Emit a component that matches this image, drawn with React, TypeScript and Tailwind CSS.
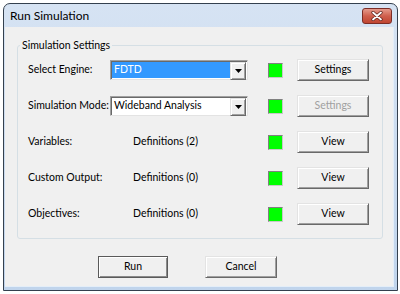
const rows = [
  { label: "Variables:", value: "Definitions (2)" },
  { label: "Custom Output:", value: "Definitions (0)" },
  { label: "Objectives:", value: "Definitions (0)" },
];

function Btn({
  children,
  disabled,
  isDefault,
  className = "",
}: {
  children: React.ReactNode;
  disabled?: boolean;
  isDefault?: boolean;
  className?: string;
}) {
  return (
    <div
      className={`flex items-center justify-center h-[22px] bg-[#f0f0f0] border ${
        isDefault
          ? "border-[#5a5a5a] shadow-[inset_1px_1px_0_#ffffff,inset_-1px_-1px_0_#8a8a8a]"
          : "border-t-[#e3e3e3] border-l-[#e3e3e3] border-r-[#696969] border-b-[#696969] shadow-[inset_1px_1px_0_#ffffff,inset_-1px_-1px_0_#a0a0a0]"
      } ${disabled ? "text-[#a0a0a0]" : "text-black"} ${className}`}
    >
      {children}
    </div>
  );
}

function Combo({ value, selected }: { value: string; selected?: boolean }) {
  return (
    <div className="flex shrink-0 h-[20px] w-[138px] border border-t-[#a0a0a0] border-l-[#a0a0a0] border-r-[#e3e3e3] border-b-[#e3e3e3] bg-white shadow-[inset_1px_1px_0_#696969]">
      <div className="flex-1 pl-[1px] pt-[1px] pb-[1px]">
        <div
          className={`h-full flex items-center pl-[2px] whitespace-nowrap ${
            selected ? "bg-[#3399ff] text-white" : "text-black"
          }`}
        >
          {value}
        </div>
      </div>
      <div className="w-[16px] h-[18px] mt-[1px] mr-[1px] bg-[#f0f0f0] border border-t-[#e3e3e3] border-l-[#e3e3e3] border-r-[#696969] border-b-[#696969] shadow-[inset_1px_1px_0_#ffffff,inset_-1px_-1px_0_#a0a0a0] flex items-center justify-center">
        <svg width="7" height="4" viewBox="0 0 7 4">
          <path d="M0 0h7L3.5 4z" fill="#000" />
        </svg>
      </div>
    </div>
  );
}

function Led() {
  return (
    <div className="w-[15px] h-[15px] bg-[#00ff00] border border-t-[#808080] border-l-[#808080] border-r-[#c8c8c8] border-b-[#c8c8c8]" />
  );
}

export default function App() {
  return (
    <div className="w-[400px] h-[294px] bg-white pt-[3px] pl-[3px] font-['Lato',sans-serif] text-[10.5px] text-black">
      <div className="w-[395px] h-[288px] flex flex-col rounded-t-[7px] border border-[#34404e] bg-gradient-to-b from-[#d6e3f3] to-[#c0d4ec]">
        {/* Title bar */}
        <div className="h-[23px] flex items-center justify-between pl-[6px] pr-[5px]">
          <span className="text-[12px] leading-none">Run Simulation</span>
          <div className="w-[30px] h-[16px] rounded-[3px] border border-[#7b2d26] bg-gradient-to-b from-[#e49a8c] via-[#cf5f4d] to-[#c04531] flex items-center justify-center">
            <svg width="12" height="10" viewBox="0 0 12 10">
              <path
                d="M2 1.5l8 7M10 1.5l-8 7"
                stroke="#5a1e18"
                strokeWidth="3.2"
                strokeLinecap="round"
              />
              <path
                d="M2 1.5l8 7M10 1.5l-8 7"
                stroke="#ffffff"
                strokeWidth="1.8"
                strokeLinecap="round"
              />
            </svg>
          </div>
        </div>

        {/* Client area */}
        <div className="flex-1 ml-[1px] mr-[3px] mb-[3px] bg-[#f0f0f0] border-b border-r border-[#e4eef8] flex flex-col">
          <fieldset className="ml-[12px] mt-[12px] w-[366px] border border-[#d5dfe5] rounded-[3px] pl-[10px] pt-[7px] pb-[13px]">
            <legend className="-ml-[8px] px-[2px] leading-[13px]">Simulation Settings</legend>
            <div className="flex flex-col gap-[14px]">
              <div className="flex items-center h-[22px]">
                <span className="w-[82px] shrink-0 whitespace-nowrap">Select Engine:</span>
                <Combo value="FDTD" selected />
                <div className="ml-[20px]">
                  <Led />
                </div>
                <Btn className="ml-[14px] w-[72px]">Settings</Btn>
              </div>
              <div className="flex items-center h-[22px]">
                <span className="w-[82px] shrink-0 whitespace-nowrap">Simulation Mode:</span>
                <Combo value="Wideband Analysis" />
                <div className="ml-[20px]">
                  <Led />
                </div>
                <Btn className="ml-[14px] w-[72px]" disabled>
                  Settings
                </Btn>
              </div>
              {rows.map((r) => (
                <div key={r.label} className="flex items-center h-[22px]">
                  <span className="w-[105px] shrink-0 whitespace-nowrap">{r.label}</span>
                  <span className="w-[115px] shrink-0 whitespace-nowrap">{r.value}</span>
                  <div className="ml-[20px]">
                    <Led />
                  </div>
                  <Btn className="ml-[14px] w-[72px]">View</Btn>
                </div>
              ))}
            </div>
          </fieldset>

          <div className="flex mt-[17px] ml-[93px] gap-[37px]">
            <Btn isDefault className="w-[70px]">
              Run
            </Btn>
            <Btn className="w-[72px]">Cancel</Btn>
          </div>
        </div>
      </div>
    </div>
  );
}
